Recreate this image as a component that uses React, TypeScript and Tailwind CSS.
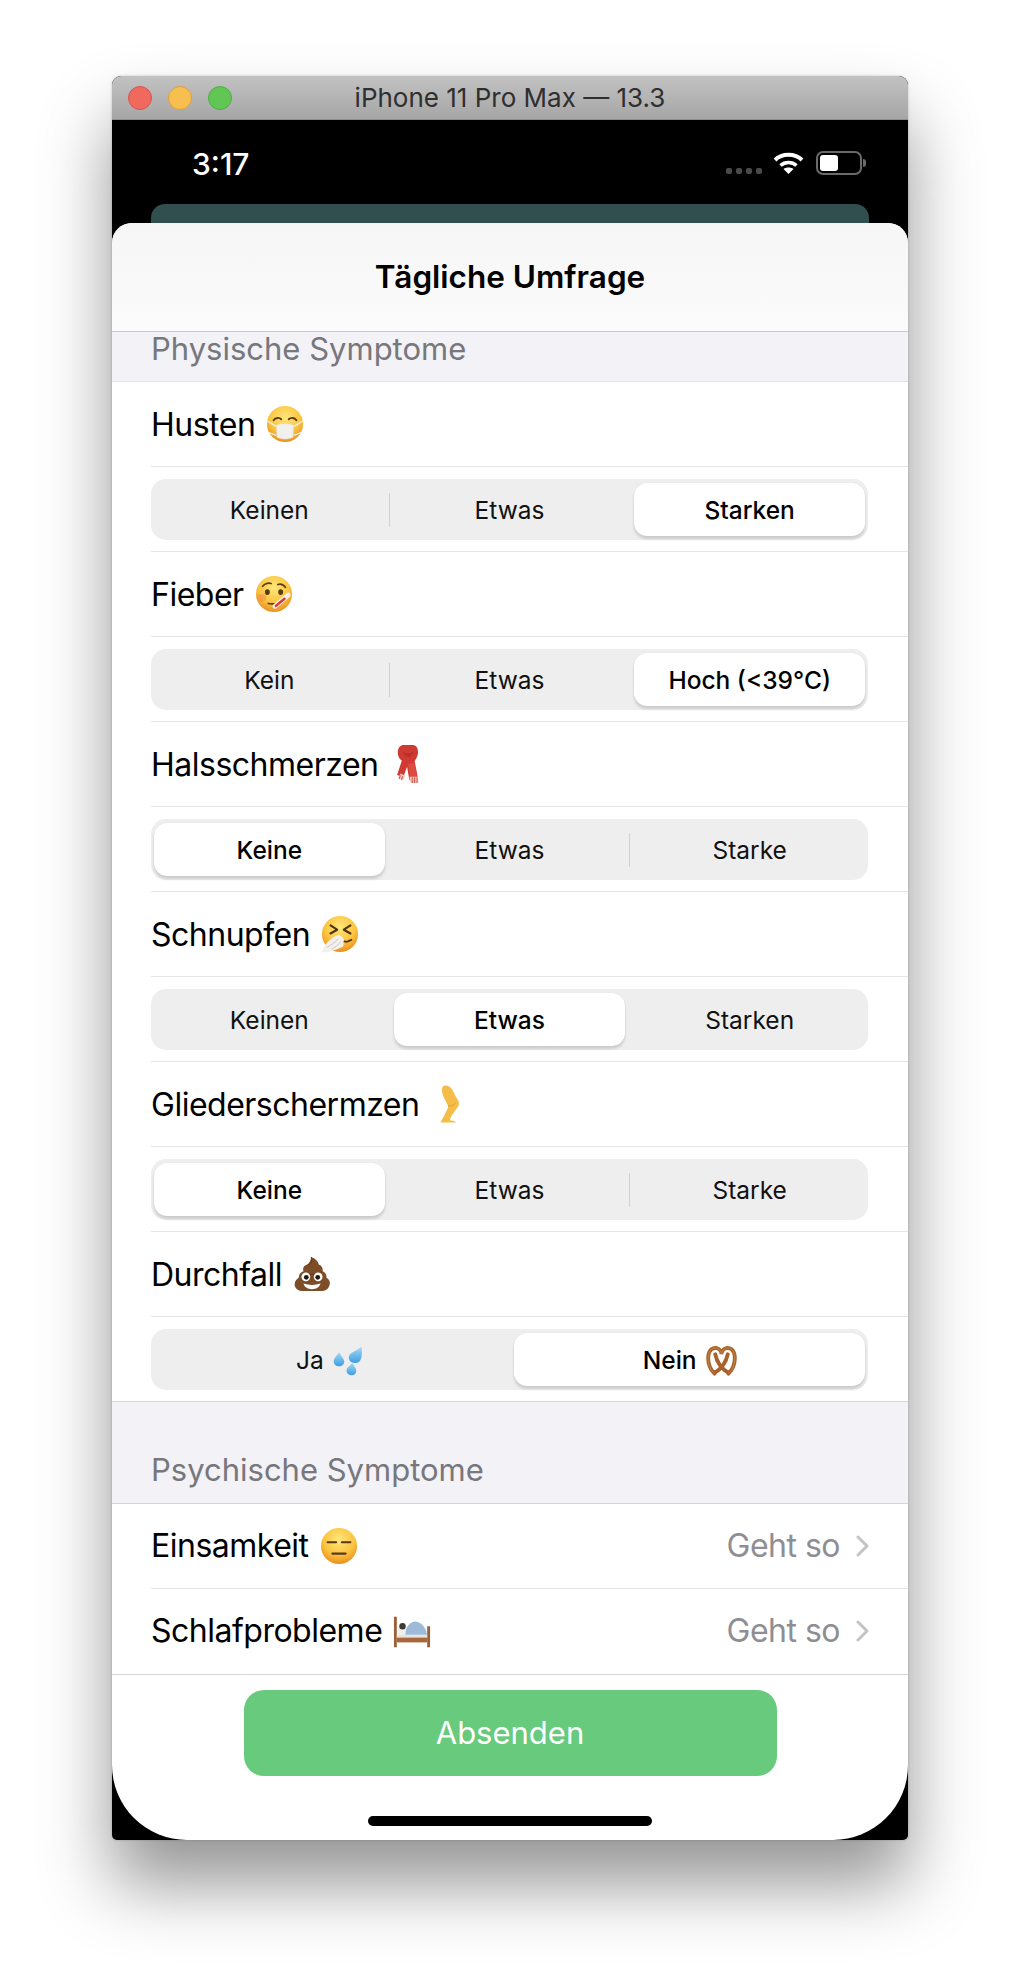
import type { ReactNode } from 'react'

// Apple-style emoji, there is no colour emoji font in the sandbox
function Emoji({ children, size = 38, label }: { children: ReactNode; size?: number; label: string }) {
  return (
    <svg width={size} height={size} viewBox="0 0 40 40" role="img" aria-label={label} className="shrink-0">
      {children}
    </svg>
  )
}

function FaceBase({ id }: { id: string }) {
  return (
    <>
      <defs>
        <radialGradient id={id} cx="50%" cy="32%" r="72%">
          <stop offset="0%" stopColor="#ffe67c" />
          <stop offset="58%" stopColor="#fbc53f" />
          <stop offset="100%" stopColor="#e8871c" />
        </radialGradient>
      </defs>
      <circle cx="20" cy="20" r="19" fill={`url(#${id})`} />
    </>
  )
}

function MaskFace() {
  return (
    <Emoji label="Maske">
      <FaceBase id="f-mask" />
      <path d="M8 16c2-3 6-3 8-1M24 15c2-2 6-2 8 1" fill="none" stroke="#5a3a12" strokeWidth="2" strokeLinecap="round" />
      <path d="M1.5 17l10 6M38.5 17l-10 6M3 29l8 3M37 29l-8 3" stroke="#f1ede4" strokeWidth="1.5" />
      <path d="M11 21c6-2 12-2 18 0l-.5 13c-5 2.5-12 2.5-17 0z" fill="#f2f0ec" stroke="#ddd8cd" strokeWidth=".6" />
    </Emoji>
  )
}

function FeverFace() {
  return (
    <Emoji label="Thermometer">
      <FaceBase id="f-fever" />
      <ellipse cx="7" cy="24" rx="5" ry="4" fill="#f48a4a" opacity=".55" />
      <path d="M8 12c2-3 6-4 9-3M24 10c3-1 6 0 8 3" fill="none" stroke="#5a3a12" strokeWidth="1.8" strokeLinecap="round" />
      <ellipse cx="13" cy="18" rx="2.6" ry="3" fill="#5a3a12" />
      <ellipse cx="27" cy="18" rx="2.6" ry="3" fill="#5a3a12" />
      <path d="M14 30c3 1 7 0 10 .5" fill="none" stroke="#5a3a12" strokeWidth="1.8" strokeLinecap="round" />
      <path d="M21 33L35 21" stroke="#f3f0ec" strokeWidth="5" strokeLinecap="round" />
      <path d="M22 32.5L31 25" stroke="#d93a30" strokeWidth="2.6" strokeLinecap="round" />
    </Emoji>
  )
}

function Scarf() {
  return (
    <Emoji label="Schal">
      <path d="M15 0h10c4 0 6 4 5.5 9-.5 4-2.5 6-3.500 8l3.500 18-9 2-2.500-14-4 11-6.500-2.500 5-15c-3-2-5-6-4-11 .5-3 3-5.500 5.500-5.500z" fill="#cf3b32" />
      <path d="M14 7c3 2 9 2 12-.5-.5 3-2 5-4.500 6.500-3-.5-6-2.500-7.500-6z" fill="#b8322a" />
      <path d="M20 20l3 16 7-1.500-3.500-16z" fill="#dd4b41" />
      <path d="M12 30l-2 5 5 2 2-5z" fill="#efc3bc" />
      <path d="M21.500 33.500l1 6.500h8.500l-.5-6.500z" fill="#f0c9c3" />
      <path d="M24.500 34v6M27 34v6M29.500 34v6M12 32l-1.500 4M14.500 33l-1.500 4" stroke="#c9392f" strokeWidth=".9" />
    </Emoji>
  )
}

function SneezeFace() {
  return (
    <Emoji label="Niesen">
      <FaceBase id="f-sneeze" />
      <path d="M10 11l7 4.500-7 4M31 11l-7 4.500 7 4" fill="none" stroke="#4e3311" strokeWidth="2.2" strokeLinecap="round" strokeLinejoin="round" />
      <path d="M24 28c2-1 2.500 1 4 0s2.500-1 4-2" fill="none" stroke="#4e3311" strokeWidth="1.8" strokeLinecap="round" />
      <path d="M18 21c3 0 5 2 6 5l-.5 7C17 37 8 39.5 0 39.5c2-3 3-6 5-9 3-3 8-8 13-9.500z" fill="#f3f1ed" />
      <path d="M6 34c4-2 9-5 12-9M11 36c4-2 8-5 10-8" fill="none" stroke="#c9c6bf" strokeWidth="1" />
    </Emoji>
  )
}

function Leg() {
  return (
    <Emoji label="Bein">
      <path d="M16 .5C20 .5 23 3 25 8C27 13 31 17 30.5 20C30 24 25 28 22.5 33C21.5 35 21 36 21 37C23 37.5 27 38 27.5 39.5L11 39.5C12 37 15 33 16.5 29C18 25.5 19.5 24 19 22C17.5 18 14 14 12.8 8C12 4 13 .5 16 .5Z" fill="#f3bd47" />
      <path d="M19 22c3 .5 6-.5 8-3" fill="none" stroke="#dc9e2b" strokeWidth="1" />
    </Emoji>
  )
}

function Poop() {
  return (
    <Emoji label="Kothaufen">
      <path d="M19 2c5 2 8 5 8 8 3 1 5 4 4 7 3 1 5 4 4 7 3 1 5 5 3 9-1 3-4 5-8 5H10c-4 0-7-2-8-5-1-4 1-7 4-9 0-4 2-6 5-7-1-3 0-6 4-7 2-2 4-4 4-8z" fill="#7d4d28" />
      <path d="M19 2c2 3 1 7-4 9M11 19c6 2 14 2 20-2" fill="none" stroke="#5f3819" strokeWidth="1" />
      <circle cx="13.5" cy="23" r="4.6" fill="#fff" />
      <circle cx="26.5" cy="23" r="4.6" fill="#fff" />
      <circle cx="14" cy="23.5" r="2.5" fill="#1e1410" />
      <circle cx="26" cy="23.5" r="2.5" fill="#1e1410" />
      <path d="M11 30c6 2 12 2 18 0-1 4-5 6-9 6s-8-2-9-6z" fill="#fff" />
    </Emoji>
  )
}

function Droplets({ size }: { size: number }) {
  return (
    <Emoji size={size} label="Tropfen">
      <defs>
        <linearGradient id="f-drop" x1="0" y1="0" x2="0" y2="1">
          <stop offset="0%" stopColor="#a6dcf7" />
          <stop offset="100%" stopColor="#3d9de0" />
        </linearGradient>
      </defs>
      <path d="M38 1c1 8 1 16-3 20-4 3-11 2-13-2s-1-7 3-10c4-2 9-5 13-8z" fill="url(#f-drop)" />
      <path d="M8 8c2 4 6 8 7 12 0 5-3 7-7 7s-7-2-7-7c0-4 5-8 7-12z" fill="url(#f-drop)" />
      <path d="M26 22c1 4 5 7 5 11 0 4-3 6-6 6s-7-2-7-6c0-4 5-7 8-11z" fill="url(#f-drop)" />
    </Emoji>
  )
}

function Pretzel({ size }: { size: number }) {
  return (
    <Emoji size={size} label="Brezel">
      <path d="M11 37C5 31 2 24 3 14 4 6 9 3 14 4c4 1 6 5 6 8 0-3 2-7 6-8 5-1 10 2 11 10 1 10-2 17-8 23M12 12c2 10 9 19 17 24M28 12c-2 10-9 19-17 24" fill="none" stroke="#a9622c" strokeWidth="5" strokeLinecap="round" />
      <path d="M11 37C5 31 2 24 3 14 4 6 9 3 14 4c4 1 6 5 6 8 0-3 2-7 6-8 5-1 10 2 11 10 1 10-2 17-8 23" fill="none" stroke="#c88d52" strokeWidth="1" />
    </Emoji>
  )
}

function BlankFace() {
  return (
    <Emoji label="Ausdruckslos">
      <FaceBase id="f-blank" />
      <path d="M8 16h9M23 16h9M13 28h14" stroke="#5a3a12" strokeWidth="2.2" strokeLinecap="round" />
    </Emoji>
  )
}

function Bed() {
  return (
    <Emoji label="Bett">
      <path d="M1 5h3v32H1zM36 15h3v22h-3z" fill="#9a5f35" />
      <path d="M4 26h32v6H4z" fill="#a8683b" />
      <path d="M4 24h32v3H4z" fill="#e8e4de" />
      <path d="M12 24c1-7 5-13 11-14 6 0 11 5 13 14z" fill="#9dbbd8" />
      <path d="M5 16c2-3 7-3 9-1l-1 9H5z" fill="#f1efea" />
      <circle cx="10" cy="15" r="3.4" fill="#3f3a36" />
    </Emoji>
  )
}

function Segmented({ items, active }: { items: ReactNode[]; active: number }) {
  return (
    <div className="flex h-[61px] items-stretch rounded-[15px] bg-[#eeeeef] px-[3px] py-[4px]">
      {items.map((item, i) => {
        // no hairline next to the selected cell
        const showSep = i < items.length - 1 && i !== active && i + 1 !== active
        return (
          <div key={i} className="contents">
            <div
              className={`flex min-w-0 flex-1 items-center justify-center gap-[9px] rounded-[13px] pt-[2px] text-[24.5px] ${
                i === active ? 'bg-white font-medium text-black shadow-[0_3px_3px_rgba(0,0,0,0.14),0_0_1px_rgba(0,0,0,0.12)]' : 'text-[#111]'
              }`}
            >
              {item}
            </div>
            {i < items.length - 1 && (
              <div className="flex w-[9.5px] shrink-0 items-center justify-center">
                {showSep && <div className="h-[34px] w-px bg-[#d2d2d4]" />}
              </div>
            )}
          </div>
        )
      })}
    </div>
  )
}

function LabelRow({ label, emoji }: { label: string; emoji: ReactNode }) {
  return (
    <div className="ml-[39px] flex h-[85px] items-center gap-[11px] border-b border-[#e5e5e7] text-[32px] tracking-[-0.5px] text-black">
      <span className="pt-[2px]">{label}</span>
      {emoji}
    </div>
  )
}

function SegmentRow({ items, active, last }: { items: ReactNode[]; active: number; last?: boolean }) {
  return (
    <div className={`flex h-[85px] flex-col border-b pt-[12px] pr-[40px] ${last ? 'border-[#d5d5d8] pl-[39px]' : 'ml-[39px] border-[#e5e5e7]'}`}>
      <Segmented items={items} active={active} />
    </div>
  )
}

function NavRow({ label, emoji, border }: { label: string; emoji: ReactNode; border: string }) {
  return (
    <div className={`ml-[39px] flex h-[85px] items-center border-b pr-[38px] text-[32px] tracking-[-0.5px] ${border}`}>
      <span className="text-black">{label}</span>
      <span className="ml-[11px]">{emoji}</span>
      <span className="ml-auto text-[#8e8e93]">Geht so</span>
      <svg width="14" height="22" viewBox="0 0 14 22" className="ml-[16px]" fill="none" stroke="#c4c4c7" strokeWidth="3" strokeLinecap="round" strokeLinejoin="round">
        <path d="M2 2l9 9-9 9" />
      </svg>
    </div>
  )
}

export default function App() {
  return (
    <div className="min-h-[1988px] bg-white pt-[76px] pl-[112px] font-['Inter',sans-serif]">
      <div className="w-[796px] overflow-hidden rounded-t-[9px] rounded-b-[5px] bg-black shadow-[0_44px_70px_rgba(0,0,0,0.42),0_0_3px_rgba(0,0,0,0.2)]">
        {/* Simulator title bar */}
        <div className="relative flex h-[44px] items-center border-b border-[#8f8f8f] bg-gradient-to-b from-[#c2c2c2] to-[#a6a6a6] pl-[16px]">
          <div className="flex gap-[16px]">
            <div className="h-[24px] w-[24px] rounded-full border border-[#d5554c] bg-[#f0695f]" />
            <div className="h-[24px] w-[24px] rounded-full border border-[#dfa23b] bg-[#f6bf4f]" />
            <div className="h-[24px] w-[24px] rounded-full border border-[#4fae45] bg-[#62c655]" />
          </div>
          <div className="absolute inset-x-0 top-[4px] text-center text-[26px] leading-[36px] text-[#2f2f2f]">iPhone 11 Pro Max — 13.3</div>
        </div>

        {/* Status bar */}
        <div className="flex h-[84px] items-start justify-between pt-[22px] pr-[42px] pl-[80px] text-white">
          <span className="text-[30px] leading-[44px] font-medium">3:17</span>
          <div className="mt-[9px] flex items-start">
            <div className="mt-[17px] flex gap-[4px]">
              <div className="h-[6px] w-[6px] rounded-[2px] bg-[#4a4a4a]" />
              <div className="h-[6px] w-[6px] rounded-[2px] bg-[#4a4a4a]" />
              <div className="h-[6px] w-[6px] rounded-[2px] bg-[#4a4a4a]" />
              <div className="h-[6px] w-[6px] rounded-[2px] bg-[#4a4a4a]" />
            </div>
            <svg width="31" height="22" viewBox="0 0 31 22" className="mt-[1px] ml-[11px]" fill="none" stroke="white">
              <path d="M2 8C9 1 22 1 29 8" strokeWidth="4" />
              <path d="M7.5 13.5C12 9.5 19 9.5 23.5 13.5" strokeWidth="3.6" />
              <path d="M15.5 22L10.5 17C13 15 18 15 20.5 17Z" fill="white" stroke="none" />
            </svg>
            <div className="ml-[12px] flex items-center">
              <div className="h-[24px] w-[46px] rounded-[7px] border-2 border-[#6a6a6a] p-[2px]">
                <div className="h-full w-[18px] rounded-[3px] bg-white" />
              </div>
              <div className="ml-[1px] h-[8px] w-[3px] rounded-r-full bg-[#6a6a6a]" />
            </div>
          </div>
        </div>

        {/* Card behind the sheet */}
        <div className="mx-[39px] h-[19px] rounded-t-[14px] bg-[#324f4f]" />

        {/* Sheet */}
        <div className="overflow-hidden rounded-t-[20px] rounded-b-[75px] bg-white">
          <div className="flex h-[109px] items-start justify-center border-b border-[#c9c9cd] bg-gradient-to-b from-[#f6f6f6] to-[#fbfbfb] pt-[34px]">
            <h1 className="text-[31.5px] leading-[40px] font-semibold text-black">Tägliche Umfrage</h1>
          </div>

          <div className="h-[50px] border-b border-[#e3e3e6] bg-[#f2f2f7] pl-[39px] text-[31px] leading-[34px] text-[#77777c]">Physische Symptome</div>

          <LabelRow label="Husten" emoji={<MaskFace />} />
          <SegmentRow items={['Keinen', 'Etwas', 'Starken']} active={2} />
          <LabelRow label="Fieber" emoji={<FeverFace />} />
          <SegmentRow items={['Kein', 'Etwas', 'Hoch (<39°C)']} active={2} />
          <LabelRow label="Halsschmerzen" emoji={<Scarf />} />
          <SegmentRow items={['Keine', 'Etwas', 'Starke']} active={0} />
          <LabelRow label="Schnupfen" emoji={<SneezeFace />} />
          <SegmentRow items={['Keinen', 'Etwas', 'Starken']} active={1} />
          <LabelRow label="Gliederschermzen" emoji={<Leg />} />
          <SegmentRow items={['Keine', 'Etwas', 'Starke']} active={0} />
          <LabelRow label="Durchfall" emoji={<Poop />} />
          <SegmentRow
            last
            items={[
              <>Ja <Droplets size={30} /></>,
              <>Nein <Pretzel size={31} /></>,
            ]}
            active={1}
          />

          <div className="flex h-[102px] items-end border-b border-[#d5d5d8] bg-[#f2f2f7] pb-[15px] pl-[39px] text-[31px] leading-[36px] text-[#77777c]">Psychische Symptome</div>

          <NavRow label="Einsamkeit" emoji={<BlankFace />} border="border-[#e5e5e7]" />
          <div className="border-b border-[#d5d5d8]">
            <NavRow label="Schlafprobleme" emoji={<Bed />} border="border-transparent" />
          </div>

          <div className="flex h-[165px] flex-col items-center pt-[15px]">
            <button type="button" className="h-[86px] w-[533px] rounded-[20px] bg-[#67ca7d] text-[31px] text-white">Absenden</button>
            <div className="mt-[40px] h-[10px] w-[284px] rounded-full bg-black" />
          </div>
        </div>
      </div>
    </div>
  )
}
